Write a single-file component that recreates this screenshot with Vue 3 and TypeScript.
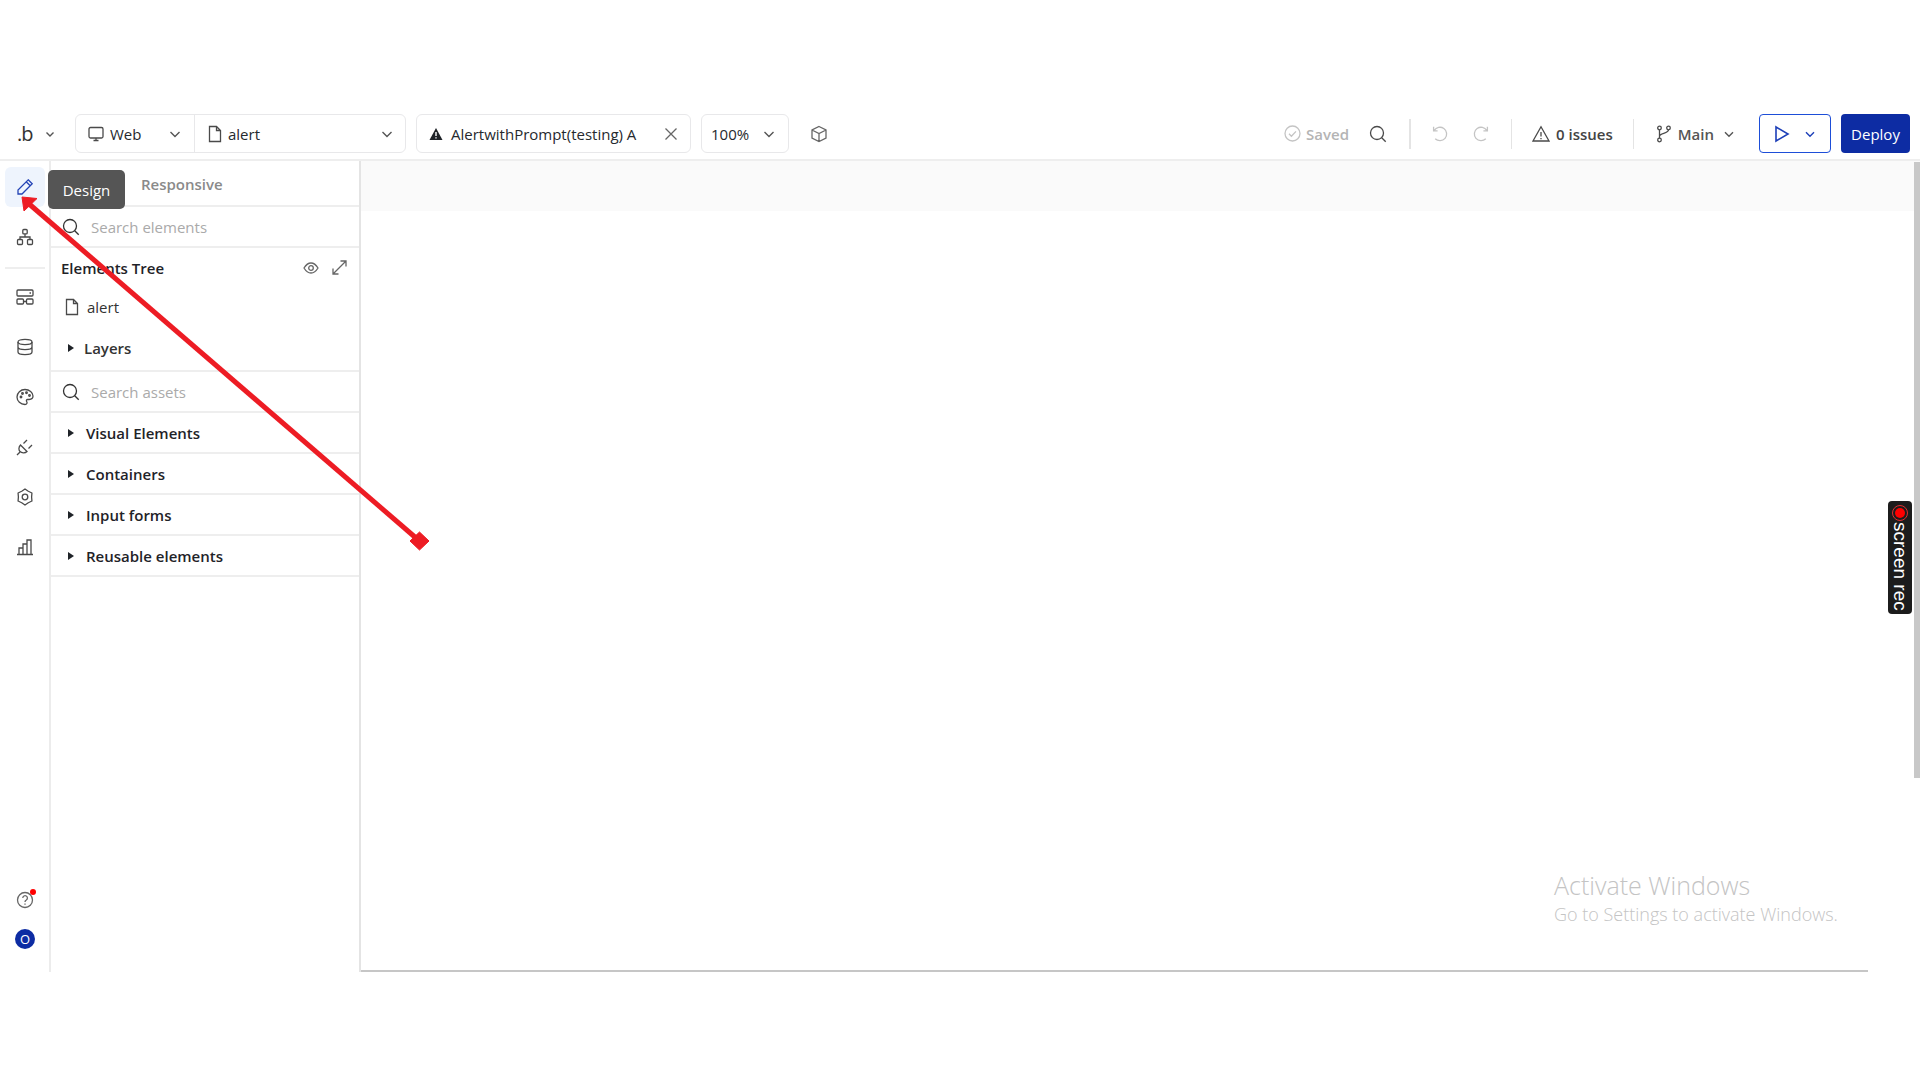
<script setup lang="ts">
const assets: string[] = ['Visual Elements', 'Containers', 'Input forms', 'Reusable elements']
</script>

<template>
  <div class="page">
    <header class="toolbar">
      <div class="brand"><span class="logo">.b</span>
        <svg class="chev" width="12" height="12" viewBox="0 0 12 12"><path d="M2.5 4.5 6 8l3.500-3.500" /></svg>
      </div>
      <div class="box pair">
        <div class="cell web">
          <svg class="ic" width="18" height="18" viewBox="0 0 18 18"><rect x="2" y="2.500" width="14" height="10.500" rx="1.500" /><path d="M6.500 15.500h5M9 13v2.500" /></svg>
          <span>Web</span>
          <svg class="chev end" width="12" height="12" viewBox="0 0 12 12"><path d="M1.500 4 6 8.500 10.500 4" /></svg>
        </div>
        <div class="cell file">
          <svg class="ic" width="18" height="18" viewBox="0 0 18 18"><path d="M3.500 1.500h7l4 4v11h-11zM10.500 1.500v4h4" /></svg>
          <span>alert</span>
          <svg class="chev end" width="12" height="12" viewBox="0 0 12 12"><path d="M1.500 4 6 8.500 10.500 4" /></svg>
        </div>
      </div>
      <div class="box tab">
        <svg width="14" height="14" viewBox="0 0 14 14"><path class="solid" d="M7 1 13.500 13H.5z" /><path class="cut" d="M7 5v4M7 10.200v1.200" /></svg>
        <span class="tabname">AlertwithPrompt(testing) A</span>
        <svg class="ic close" width="14" height="14" viewBox="0 0 14 14"><path d="M1.500 1.500l11 11M12.500 1.500l-11 11" /></svg>
      </div>
      <div class="box zoom">
        <span>100%</span>
        <svg class="chev" width="12" height="12" viewBox="0 0 12 12"><path d="M1.500 4 6 8.500 10.500 4" /></svg>
      </div>
      <svg class="ic cube" width="18" height="18" viewBox="0 0 18 18"><path d="M9 1.500 16 5v8l-7 3.500L2 13V5zM2 5l7 3.500L16 5M9 8.500v8" /></svg>

      <div class="right">
        <svg class="ic faint" width="17" height="17" viewBox="0 0 17 17"><circle cx="8.500" cy="8.500" r="7.500" /><path d="m5 8.800 2.400 2.400L12 6.400" /></svg>
        <span class="saved">Saved</span>
        <svg class="ic search-top" width="18" height="18" viewBox="0 0 18 18"><circle cx="8" cy="8" r="6.500" /><path d="m12.700 12.700 4 4" /></svg>
        <i class="sep first"></i>
        <svg class="ic faint undo" width="18" height="18" viewBox="0 0 18 18"><path d="M4.200 13.700A6.700 6.700 0 1 0 3.200 5.500M2.600 1.800v4h4" /></svg>
        <svg class="ic faint redo" width="18" height="18" viewBox="0 0 18 18"><path d="M13.800 13.700A6.700 6.700 0 1 1 14.800 5.500M15.400 1.800v4h-4" /></svg>
        <i class="sep second"></i>
        <svg class="ic warn" width="18" height="18" viewBox="0 0 18 18"><path d="M9 1.800 17 16H1zM9 7v4.500M9 13v1.200" /></svg>
        <span class="issues">0 issues</span>
        <i class="sep third"></i>
        <svg class="ic branch" width="16" height="18" viewBox="0 0 16 18"><circle cx="3.500" cy="3" r="1.800" /><circle cx="3.500" cy="15" r="1.800" /><circle cx="12.500" cy="3" r="1.800" /><path d="M3.500 4.800v8.400M12.500 4.800c0 4-9 3-9 6.500" /></svg>
        <span class="main">Main</span>
        <svg class="chev main-chev" width="12" height="12" viewBox="0 0 12 12"><path d="M2 4.200 6 8.200l4-4" /></svg>
        <button class="play">
          <svg class="tri" width="16" height="18" viewBox="0 0 16 18"><path d="M2 2v14l12-7z" /></svg>
          <svg class="blue-chev" width="12" height="12" viewBox="0 0 12 12"><path d="M2 4.200 6 8.200l4-4" /></svg>
        </button>
        <button class="deploy">Deploy</button>
      </div>
    </header>

    <div class="body">
      <nav class="rail">
        <div class="rail-top">
          <div class="rail-btn active">
            <svg width="18" height="18" viewBox="0 0 18 18"><path d="M12.200 1.800 16.200 5.800 6 16H2v-4zM10.200 3.800l4 4" /></svg>
          </div>
          <div class="rail-btn">
            <svg width="18" height="18" viewBox="0 0 18 18"><rect x="6.800" y="1.500" width="4.400" height="4.400" rx="1" /><rect x="1.500" y="11.500" width="5" height="5" rx="1" /><rect x="11.500" y="11.500" width="5" height="5" rx="1" /><path d="M9 6v3M4 11.500V9h10v2.500" /></svg>
          </div>
          <div class="rail-rule"></div>
          <div class="rail-btn">
            <svg width="18" height="18" viewBox="0 0 18 18"><rect x="1" y="2" width="16" height="6" rx="1" /><rect x="1" y="11" width="6.500" height="5" rx="1" /><rect x="10.500" y="11" width="6.500" height="5" rx="1" /><path d="M7.500 13.500h3M13.500 5h1.500" /></svg>
          </div>
          <div class="rail-btn">
            <svg width="18" height="18" viewBox="0 0 18 18"><ellipse cx="9" cy="4" rx="7" ry="2.600" /><path d="M2 4v10c0 1.500 3 2.600 7 2.600s7-1.100 7-2.600V4M2 9c0 1.500 3 2.600 7 2.600s7-1.100 7-2.600" /></svg>
          </div>
          <div class="rail-btn">
            <svg width="18" height="18" viewBox="0 0 18 18"><path d="M9 1.500c4.400 0 8 2.900 8 6.600 0 2.300-1.900 3.400-3.900 3.400h-1.600c-1 0-1.500 1.300-.8 2.100.8 1 .2 2.900-1.700 2.900-4.400 0-8-3.400-8-7.500s3.600-7.500 8-7.500z" /><circle cx="5" cy="9" r=".8" /><circle cx="6.500" cy="5.500" r=".8" /><circle cx="10.500" cy="4.800" r=".8" /><circle cx="13.500" cy="7.500" r=".8" /></svg>
          </div>
          <div class="rail-btn">
            <svg width="18" height="18" viewBox="0 0 18 18"><path d="M4.500 7 11 13.500C9 15.500 5.500 15 4 13.500 2.500 12 2.500 9 4.500 7zM7.500 5.500 11 2M12.500 10.500 16 7M3.800 14.200 1 17" /></svg>
          </div>
          <div class="rail-btn">
            <svg width="18" height="18" viewBox="0 0 18 18"><path class="gear" d="M9 1 12.300 3.280 15.930 5 15.600 9 15.930 13 12.300 14.720 9 17 5.700 14.720 2.070 13 2.400 9 2.070 5 5.700 3.280z" /><circle cx="9" cy="9" r="2.800" /></svg>
          </div>
          <div class="rail-btn">
            <svg width="18" height="18" viewBox="0 0 18 18"><path d="M1 16.500h16M3 16.500V10h4v6.500M7 16.500V6h4v10.500M11 16.500V2h4v14.500" /></svg>
          </div>
        </div>
        <div class="rail-bottom">
          <div class="help">
            <svg width="18" height="18" viewBox="0 0 18 18"><circle cx="9" cy="9" r="7.500" /><path d="M6.800 7a2.300 2.300 0 1 1 3.500 2c-.9.500-1.300 1-1.300 2M9 12.600v1.200" /></svg>
            <b class="dot"></b>
          </div>
          <div class="avatar">O</div>
        </div>
      </nav>

      <aside class="panel">
        <div class="tabs">
          <span class="tab-design">Design</span>
          <span class="tab-resp">Responsive</span>
        </div>
        <div class="search line">
          <svg class="ic lens" width="18" height="18" viewBox="0 0 18 18"><circle cx="8" cy="8" r="6.500" /><path d="m12.700 12.700 4 4" /></svg>
          <span>Search elements</span>
        </div>
        <div class="tree-head">
          <strong>Elements Tree</strong>
          <svg class="ic eye" width="16" height="16" viewBox="0 0 16 16"><path d="M1 8c2-3.300 4.300-5 7-5s5 1.700 7 5c-2 3.300-4.300 5-7 5s-5-1.700-7-5z" /><circle cx="8" cy="8" r="2.300" /></svg>
          <svg class="ic expand" width="15" height="15" viewBox="0 0 15 15"><path d="M1 14 14 1M8.500 1H14v5.500M1 8.500V14h5.500" /></svg>
        </div>
        <div class="tree-file">
          <svg class="ic" width="18" height="18" viewBox="0 0 18 18"><path d="M3.500 1.500h7l4 4v11h-11zM10.500 1.500v4h4" /></svg>
          <span>alert</span>
        </div>
        <div class="layers">
          <svg width="6" height="8" viewBox="0 0 6 8"><path class="solid" d="M0 0l6 4-6 4z" /></svg>
          <span>Layers</span>
        </div>
        <div class="search assets">
          <svg class="ic lens" width="18" height="18" viewBox="0 0 18 18"><circle cx="8" cy="8" r="6.500" /><path d="m12.700 12.700 4 4" /></svg>
          <span>Search assets</span>
        </div>
        <div v-for="a in assets" :key="a" class="asset">
          <svg width="6" height="8" viewBox="0 0 6 8"><path class="solid" d="M0 0l6 4-6 4z" /></svg>
          <span>{{ a }}</span>
        </div>
      </aside>

      <main class="canvas"><div class="strip"></div></main>
    </div>

    <div class="scrollbar"></div>

    <div class="recorder">
      <svg width="18" height="18" viewBox="0 0 18 18"><circle cx="9" cy="9" r="7.500" class="ring" /><circle cx="9" cy="9" r="5" class="rec" /></svg>
      <span>screen rec</span>
    </div>

    <div class="watermark">
      <div class="wm-title">Activate Windows</div>
      <div class="wm-sub">Go to Settings to activate Windows.</div>
    </div>

    <svg class="arrow" width="440" height="400" viewBox="0 0 440 400">
      <path class="shaft" d="M419.500 366 28 28" />
      <path class="head" d="M22 22 37 23.500 24 36z" />
      <path class="head" d="M419.500 357 429 366 419.500 375 410 366z" />
    </svg>
  </div>
</template>

<style>
html, body { margin: 0; background: #fff; }
</style>

<style scoped>
.page {
  position: relative;
  width: 1920px;
  height: 1080px;
  overflow: hidden;
  padding-top: 100px;
  box-sizing: border-box;
  background: #fff;
  font-family: "Open Sans", "Noto Sans", sans-serif;
  font-size: 15px;
  color: #26292e;
}
svg { display: block; flex: none; }
svg path, svg rect, svg circle, svg ellipse { fill: none; stroke: #4a4a4a; stroke-width: 1.3; }
svg .solid { fill: #1f2328; stroke: none; }
svg .cut { stroke: #fff; stroke-width: 1.4; }
svg .gear { stroke-linejoin: round; }
.chev path { stroke: #555; stroke-width: 1.4; }

.toolbar {
  height: 61px;
  box-sizing: border-box;
  border-bottom: 2px solid #eeeeee;
  display: flex;
  align-items: center;
  padding: 8px 0 0 17px;
}
.brand { width: 58px; display: flex; align-items: center; }
.logo { font-size: 20px; width: 27px; letter-spacing: -1px; color: #333; }
.box {
  height: 39px;
  box-sizing: border-box;
  border: 1px solid #e8e8ea;
  border-radius: 6px;
  display: flex;
  align-items: center;
}
.pair { width: 331px; }
.cell { height: 100%; display: flex; align-items: center; box-sizing: border-box; }
.web { width: 119px; padding-left: 11px; border-right: 1px solid #e8e8ea; }
.web span { margin-left: 5px; }
.file { flex: 1; padding-left: 11px; }
.file span { margin-left: 4px; }
.end { margin-left: auto; margin-right: 12px; }
.web .end { margin-right: 13px; }
.tab { width: 275px; margin-left: 10px; padding-left: 12px; }
.tabname { margin-left: 8px; white-space: nowrap; }
.close { margin-left: auto; margin-right: 12px; }
.close path { stroke: #666; }
.zoom { width: 88px; margin-left: 10px; padding-left: 9px; }
.zoom .chev { margin-left: 14px; }
.cube { margin-left: 21px; }
.cube path { stroke: #666; }

.right { margin-left: auto; display: flex; align-items: center; height: 39px; padding-right: 10px; }
.faint path, .faint circle { stroke: #c4c4c4; }
.saved { color: #b4b4b4; margin-left: 5px; font-weight: 600; font-size: 15px; }
.search-top { margin-left: 20px; }
.sep { display: block; width: 1px; height: 30px; background: #e4e4e4; }
.sep.first { margin-left: 22px; width: 2px; }
.undo { margin-left: 20px; }
.redo { margin-left: 23px; }
.sep.second { margin-left: 21px; }
.warn { margin-left: 20px; }
.issues { margin-left: 6px; font-weight: 600; font-size: 15px; color: #444; }
.sep.third { margin-left: 20px; }
.branch { margin-left: 22px; }
.main { margin-left: 6px; font-weight: 600; font-size: 15px; color: #555; }
.main-chev { margin-left: 9px; }
.play {
  width: 72px; height: 39px; margin-left: 24px; padding: 0 0 0 14px;
  border: 1.5px solid #1d4ed8; border-radius: 4px; background: #fff;
  display: flex; align-items: center;
}
.tri path { stroke: #1d3fb8; stroke-width: 1.6; }
.blue-chev { margin-left: 14px; }
.blue-chev path { stroke: #1d3fb8; stroke-width: 1.4; }
.deploy {
  width: 69px; height: 39px; margin-left: 10px; padding: 0;
  border: 0; border-radius: 4px; background: #0d2ca3; color: #fff;
  font: 500 15px "Open Sans", sans-serif;
}

.body { display: flex; height: 811px; }
.rail {
  width: 51px; flex: none; box-sizing: border-box; border-right: 2px solid #ececec;
  display: flex; flex-direction: column; justify-content: space-between;
  padding: 6px 0 23px 5px;
}
.rail-top { display: flex; flex-direction: column; }
.rail-btn { width: 40px; height: 40px; border-radius: 6px; display: flex; align-items: center; justify-content: center; margin-bottom: 10px; }
.active { background: #eef4fd; }
.active path { stroke: #2343b5; }
.rail-rule { width: 40px; height: 2px; background: #eeeeee; margin-bottom: 8px; }
.rail-bottom { display: flex; flex-direction: column; align-items: center; width: 40px; }
.help { position: relative; margin-bottom: 20px; }
.help path, .help circle { stroke: #666; }
.dot { position: absolute; right: -2px; top: -2px; width: 6px; height: 6px; border-radius: 50%; background: #f00; }
.avatar {
  width: 20px; height: 20px; border-radius: 50%; background: #0d2ca3; color: #fff;
  font-size: 13px; display: flex; align-items: center; justify-content: center;
}

.panel { width: 310px; flex: none; box-sizing: border-box; border-right: 2px solid #e4e4e4; font-weight: 600; }
.tabs { height: 46px; box-sizing: border-box; border-bottom: 2px solid #eeeeee; position: relative; }
.tab-resp { position: absolute; left: 90px; top: 13px; color: #8a8a8a; font-size: 15px; }
.tab-design {
  position: absolute; left: -3px; top: 9px; width: 77px; height: 39px;
  background: #555; color: #fff; border-radius: 5px; display: flex; align-items: center; justify-content: center;
  font-weight: 500; font-size: 15px; z-index: 2;
}
.search { display: flex; align-items: center; padding-left: 11px; box-sizing: border-box; color: #aaa; font-weight: 400; border-bottom: 2px solid #eeeeee; }
.search span { margin-left: 11px; }
.search.line { height: 41px; }
.search.assets { height: 41px; }
.lens path, .lens circle { stroke: #333; }
.tree-head { height: 39px; display: flex; align-items: center; padding-left: 10px; }
.tree-head strong { font-weight: 600; color: #1f2328; }
.eye { margin-left: auto; margin-right: 2px; }
.eye path, .eye circle, .expand path { stroke: #666; }
.expand { margin: 0 12px 0 11px; }
.tree-file { height: 40px; display: flex; align-items: center; padding-left: 12px; font-weight: 400; color: #333; }
.tree-file span { margin-left: 6px; }
.layers { height: 41px; padding-bottom: 2px; display: flex; align-items: center; padding-left: 17px; border-bottom: 2px solid #eeeeee; color: #333; }
.layers span { margin-left: 10px; }
.asset { height: 39px; display: flex; align-items: center; padding-left: 17px; border-bottom: 2px solid #eeeeee; color: #1f2328; }
.asset span { margin-left: 12px; }

.canvas { flex: 1; min-width: 0; border-bottom: 2px solid #c6c6c6; margin-right: 52px; }
.strip { height: 50px; background: #fafafa; margin-right: -52px; }

.scrollbar { position: absolute; right: 0; top: 162px; width: 6px; height: 616px; background: #c8c8c8; }
.recorder {
  position: absolute; left: 1888px; top: 501px; width: 24px; height: 113px;
  background: #1c1c1c; border-radius: 4px; box-sizing: border-box; padding-top: 3px;
  display: flex; flex-direction: column; align-items: center; color: #fff;
}
.recorder span { writing-mode: vertical-rl; font-size: 19px; line-height: 20px; white-space: nowrap; font-family: "Liberation Sans", sans-serif; }
.ring { stroke: #e03030; stroke-width: 1; }
.rec { fill: #f00; stroke: none; }

.watermark { position: absolute; left: 1554px; top: 869px; color: #c4c4c4; font-weight: 300; }
.wm-title { font-size: 25px; line-height: 32px; }
.wm-sub { font-size: 18px; line-height: 26px; }

.arrow { position: absolute; left: 0; top: 175px; pointer-events: none; z-index: 5; }
.arrow .shaft { stroke: #ed1c24; stroke-width: 5; }
.arrow .head { fill: #ed1c24; stroke: #ed1c24; stroke-width: 1; stroke-linejoin: round; }
</style>
